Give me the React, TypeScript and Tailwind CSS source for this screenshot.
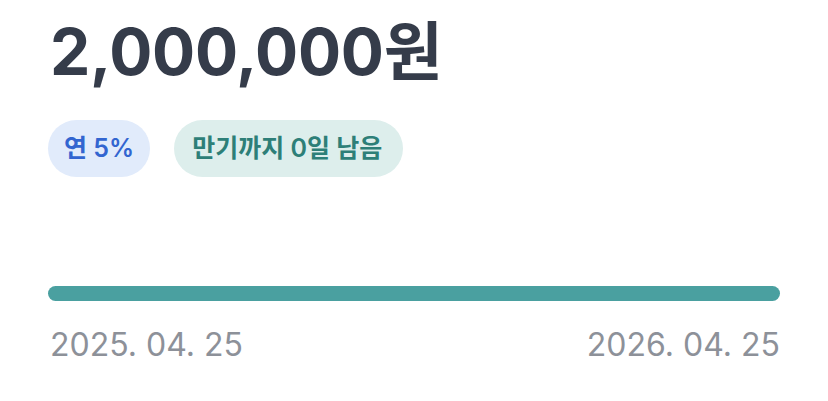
import React from "react";

export default function App() {
  return (
    <div className="w-[828px] h-[401px] bg-white px-12 pt-[14px] font-['Inter','Noto_Sans_CJK_KR',sans-serif]">
      <h1 className="text-[64px] leading-[76px] font-bold text-[#353c4a] tracking-[-0.3px] pl-[2px]">2,000,000원</h1>
      <div className="mt-[30px] flex gap-[24px]">
        <span className="h-[57px] px-[16px] rounded-full bg-[#e1ebfb] text-[#3265d0] text-[25px] font-semibold flex items-center">연 5%</span>
        <span className="h-[57px] pl-[18px] pr-[21px] rounded-full bg-[#ddeeec] text-[#2d7f78] text-[25px] font-semibold flex items-center">만기까지 0일 남음</span>
      </div>
      <div className="mt-[109px] h-[15px] w-[732px] rounded-full bg-[#4aa0a0]" />
      <div className="mt-[24px] w-[732px] flex justify-between text-[32px] leading-[40px] text-[#8d9199] pl-[2px]">
        <span>2025. 04. 25</span>
        <span>2026. 04. 25</span>
      </div>
    </div>
  );
}
